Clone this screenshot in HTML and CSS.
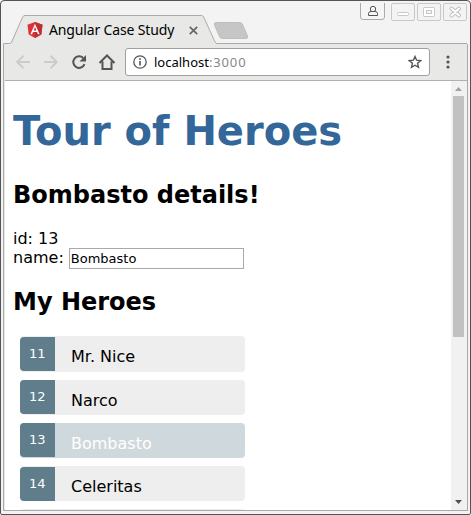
FILE: index.html
```html
<!DOCTYPE html>
<html lang="en">
<head>
<meta charset="utf-8">
<title>Angular Case Study</title>
<link rel="stylesheet" href="styles.css">
</head>
<body>
<div class="window">
  <header class="titlebar">
    <svg class="tabs" width="469" height="43" viewBox="1 1 469 43">
      <path d="M4.5 44V43.5H9.5Q11 43.5 11.7 42L22.6 17Q23.400 15.500 25 15.500H201.500Q203 15.500 203.700 17L214.800 41.500Q215.800 43.500 217 43.500H466.500V44Z" fill="#e8e8e6"/>
      <path d="M3.500 44.500V43.500H9.500Q11 43.500 11.700 42L22.600 17Q23.400 15.500 25 15.500H201.500Q203 15.500 203.700 17L214.800 41.500Q215.800 43.500 217 43.500H467" fill="none" stroke="#aaa"/>
      <path d="M216 22.500H239.500Q241.500 22.500 242.300 24L247.500 36Q248.300 38.500 246 38.500H222.500Q220.500 38.500 219.700 37L214.500 25Q213.700 22.500 216 22.500Z" fill="#c6c6c6" stroke="#bebebe"/>
    </svg>
    <div class="tab">
      <svg class="logo" width="16" height="16" viewBox="0 0 16 16"><path d="M8 0L15.500 2.700L14.300 12.500L8 16L1.700 12.500L.5 2.700Z" fill="#dd3038"/><path d="M8 0L15.500 2.700L14.300 12.500L8 16Z" fill="#bf2c32"/><path d="M8 1.800L3.400 12.300H5.100L6 10H10L10.900 12.300H12.600ZM8 5.100L9.400 8.600H6.600Z" fill="#fff" fill-rule="evenodd"/></svg>
      <span class="tab-title">Angular Case Study</span>
      <svg class="tab-close" width="9" height="9" viewBox="0 0 9 9"><path d="M.8.800L8.200 8.200M8.200.800L.8 8.200" stroke="#666" stroke-width="1.700"/></svg>
    </div>
    <svg class="controls" width="110" height="22" viewBox="359 1 110 22">
      <path d="M360.500 3V17Q360.500 19.500 363 19.500H382Q384.500 19.500 384.500 17V3" fill="#f5f5f5" stroke="#aaa"/>
      <path d="M368.500 15.500V13.500Q368.500 11.500 371 11.500H375Q377.500 11.500 377.500 13.500V15.500Z" fill="none" stroke="#555"/>
      <circle cx="373" cy="9" r="2.700" fill="#f5f5f5" stroke="#555"/>
      <g fill="none" stroke="#c8c8c8"><rect x="391.500" y="3.500" width="23" height="17" rx="1.500"/><rect x="417.500" y="3.500" width="23" height="17" rx="1.500"/><rect x="443.500" y="3.500" width="23" height="17" rx="1.500"/>
      <rect x="397.500" y="12.500" width="11" height="3" rx="1" fill="#fff"/><rect x="423.500" y="7.500" width="11" height="9" rx="1" fill="#fff"/><rect x="426.500" y="10.500" width="5" height="3" fill="#f2f2f2"/></g>
      <path d="M451.500 8.500L459 15.500M459 8.500L451.500 15.500" stroke="#bebebe" stroke-width="4" stroke-linecap="round"/>
      <path d="M451.500 8.500L459 15.500M459 8.500L451.500 15.500" stroke="#fff" stroke-width="2" stroke-linecap="round"/>
    </svg>
  </header>
  <div class="frame">
    <nav class="toolbar">
      <svg class="nav-icons" width="112" height="24" viewBox="12 50 112 24" fill="none" stroke-width="2">
        <path d="M30 62H17.500M23.500 55.700L17.200 62L23.500 68.300" stroke="#ccc"/>
        <path d="M44 62H56.500M50.500 55.700L56.800 62L50.500 68.300" stroke="#ccc"/>
        <path d="M84.500 64.200A5.800 5.800 0 1 1 83.200 58" stroke="#555"/>
        <path d="M86 55V61.500H79.500Z" fill="#555"/>
        <path d="M99.500 63L107 55.500L114.500 63M102.500 61.500V69H111.500V61.500" stroke="#555"/>
      </svg>
      <div class="address">
        <svg class="info" width="14" height="14" viewBox="0 0 14 14"><circle cx="7" cy="7" r="6.200" fill="none" stroke="#555" stroke-width="1.300"/><path d="M7 6V10.500M7 3.300V5" stroke="#555" stroke-width="1.600"/></svg>
        <span class="url">localhost<span class="port">:3000</span></span>
        <svg class="star" width="14" height="14" viewBox="0 0 14 14"><path d="M7 1.500L8.600 5.200L12.700 5.600L9.600 8.300L10.500 12.300L7 10.200L3.500 12.300L4.400 8.300L1.300 5.600L5.400 5.200Z" fill="none" stroke="#555" stroke-width="1.400"/></svg>
      </div>
      <svg class="menu" width="4" height="14" viewBox="0 0 4 14" fill="#555"><circle cx="2" cy="2" r="1.600"/><circle cx="2" cy="7" r="1.600"/><circle cx="2" cy="12" r="1.600"/></svg>
    </nav>
    <div class="viewport">
      <main class="page">
        <h1>Tour of Heroes</h1>
        <h2>Bombasto details!</h2>
        <div class="line">id: 13</div>
        <div class="line">name: <input class="name" type="text" value="Bombasto"></div>
        <h2>My Heroes</h2>
        <ul class="heroes">
          <li><span class="badge">11</span><span class="hero">Mr. Nice</span></li>
          <li><span class="badge">12</span><span class="hero">Narco</span></li>
          <li class="selected"><span class="badge">13</span><span class="hero">Bombasto</span></li>
          <li><span class="badge">14</span><span class="hero">Celeritas</span></li>
          <li></li>
        </ul>
      </main>
      <div class="scrollbar">
        <svg width="15" height="15" viewBox="0 0 15 15"><path d="M4 10L7.500 6L11 10Z" fill="#a0a0a0"/></svg>
        <div class="thumb"></div>
        <svg class="down" width="15" height="15" viewBox="0 0 15 15"><path d="M4 5L7.500 9L11 5Z" fill="#505050"/></svg>
      </div>
    </div>
  </div>
</div>
</body>
</html>
```
FILE: styles.css
```css
* { box-sizing: border-box; }
body {
  margin: 0;
  width: 471px;
  height: 515px;
  overflow: hidden;
  background: #fff;
  font: 16px/19px "DejaVu Sans", sans-serif;
  color: #000;
}
svg { display: block; flex: none; }
.window {
  height: 515px;
  border: 1px solid #555355;
  border-radius: 4px 4px 2px 2px;
  background: #f3f3f3;
  overflow: hidden;
}
.titlebar { position: relative; height: 43px; }
.tabs { position: absolute; left: 0; top: 0; }
.controls { position: absolute; right: 1px; top: 0; }
.tab {
  position: relative;
  display: flex;
  align-items: center;
  width: 203px;
  height: 28px;
  margin-left: 26px;
  top: 15px;
}
.tab-title {
  margin-left: 6px;
  width: 140px;
  font: 14px/20px "Noto Sans", sans-serif;
  letter-spacing: -0.15px;
  white-space: nowrap;
}
.frame {
  height: 467px;
  margin: 0 2px 0 2px;
  border: 1px solid #aaa;
  border-top: 0;
  padding: 0 0 1px 1px;
  background: #e8e8e6;
}
.toolbar {
  display: flex;
  align-items: center;
  height: 37px;
  padding-left: 7px;
  border-bottom: 1px solid #b0b0b0;
}
.address {
  display: flex;
  align-items: center;
  width: 305px;
  height: 28px;
  margin-left: 1px;
  padding: 0 7px;
  border: 1px solid #a0a0a0;
  border-radius: 3px;
  background: #fff;
}
.url {
  flex: 1;
  margin-left: 7px;
  font: 13px/20px "Noto Sans", sans-serif;
}
.port { color: #888; letter-spacing: 0.85px; }
.menu { margin-left: 16px; }
.viewport { display: flex; height: 429px; background: #fff; }
.page { flex: 1; padding: 0 8px; overflow: hidden; }
h1 { margin: 27px 0 0; font-size: 40px; line-height: 47px; color: #369; white-space: nowrap; }
h2 { margin: 0; font-size: 24px; line-height: 28px; }
h1 + h2 { margin: 26px 0 20px; }
.line { height: 19px; display: flex; gap: 5px; }
.line + h2 { margin: 21px 0 20.4px; }
.name {
  width: 175px;
  height: 21px;
  padding: 1px;
  border: 1px solid #a9a9a9;
  font: 13px/16px "DejaVu Sans", sans-serif;
}
.heroes { width: 15em; margin: 0; padding: 0; list-style: none; }
.heroes li {
  display: flex;
  height: 35.2px;
  margin: 8px 8px 8px 7px;
  border-radius: 4px;
  background: #eee;
}
.heroes li.selected { background: #cfd8dc; color: #fff; }
.badge {
  width: 35px;
  height: 34px;
  margin-top: 0.6px;
  padding: 10px 9px 0;
  border-radius: 4px 0 0 4px;
  background: #607d8b;
  color: #fff;
  font-size: 13px;
  line-height: 13px;
}
.hero { margin-left: 16px; padding-top: 11px; line-height: 19px; }
.scrollbar { display: flex; flex-direction: column; width: 16px; background: #f1f1f1; }
.thumb { width: 11px; height: 241px; margin-left: 2px; background: #c1c1c1; }
.down { margin-top: auto; }
```
